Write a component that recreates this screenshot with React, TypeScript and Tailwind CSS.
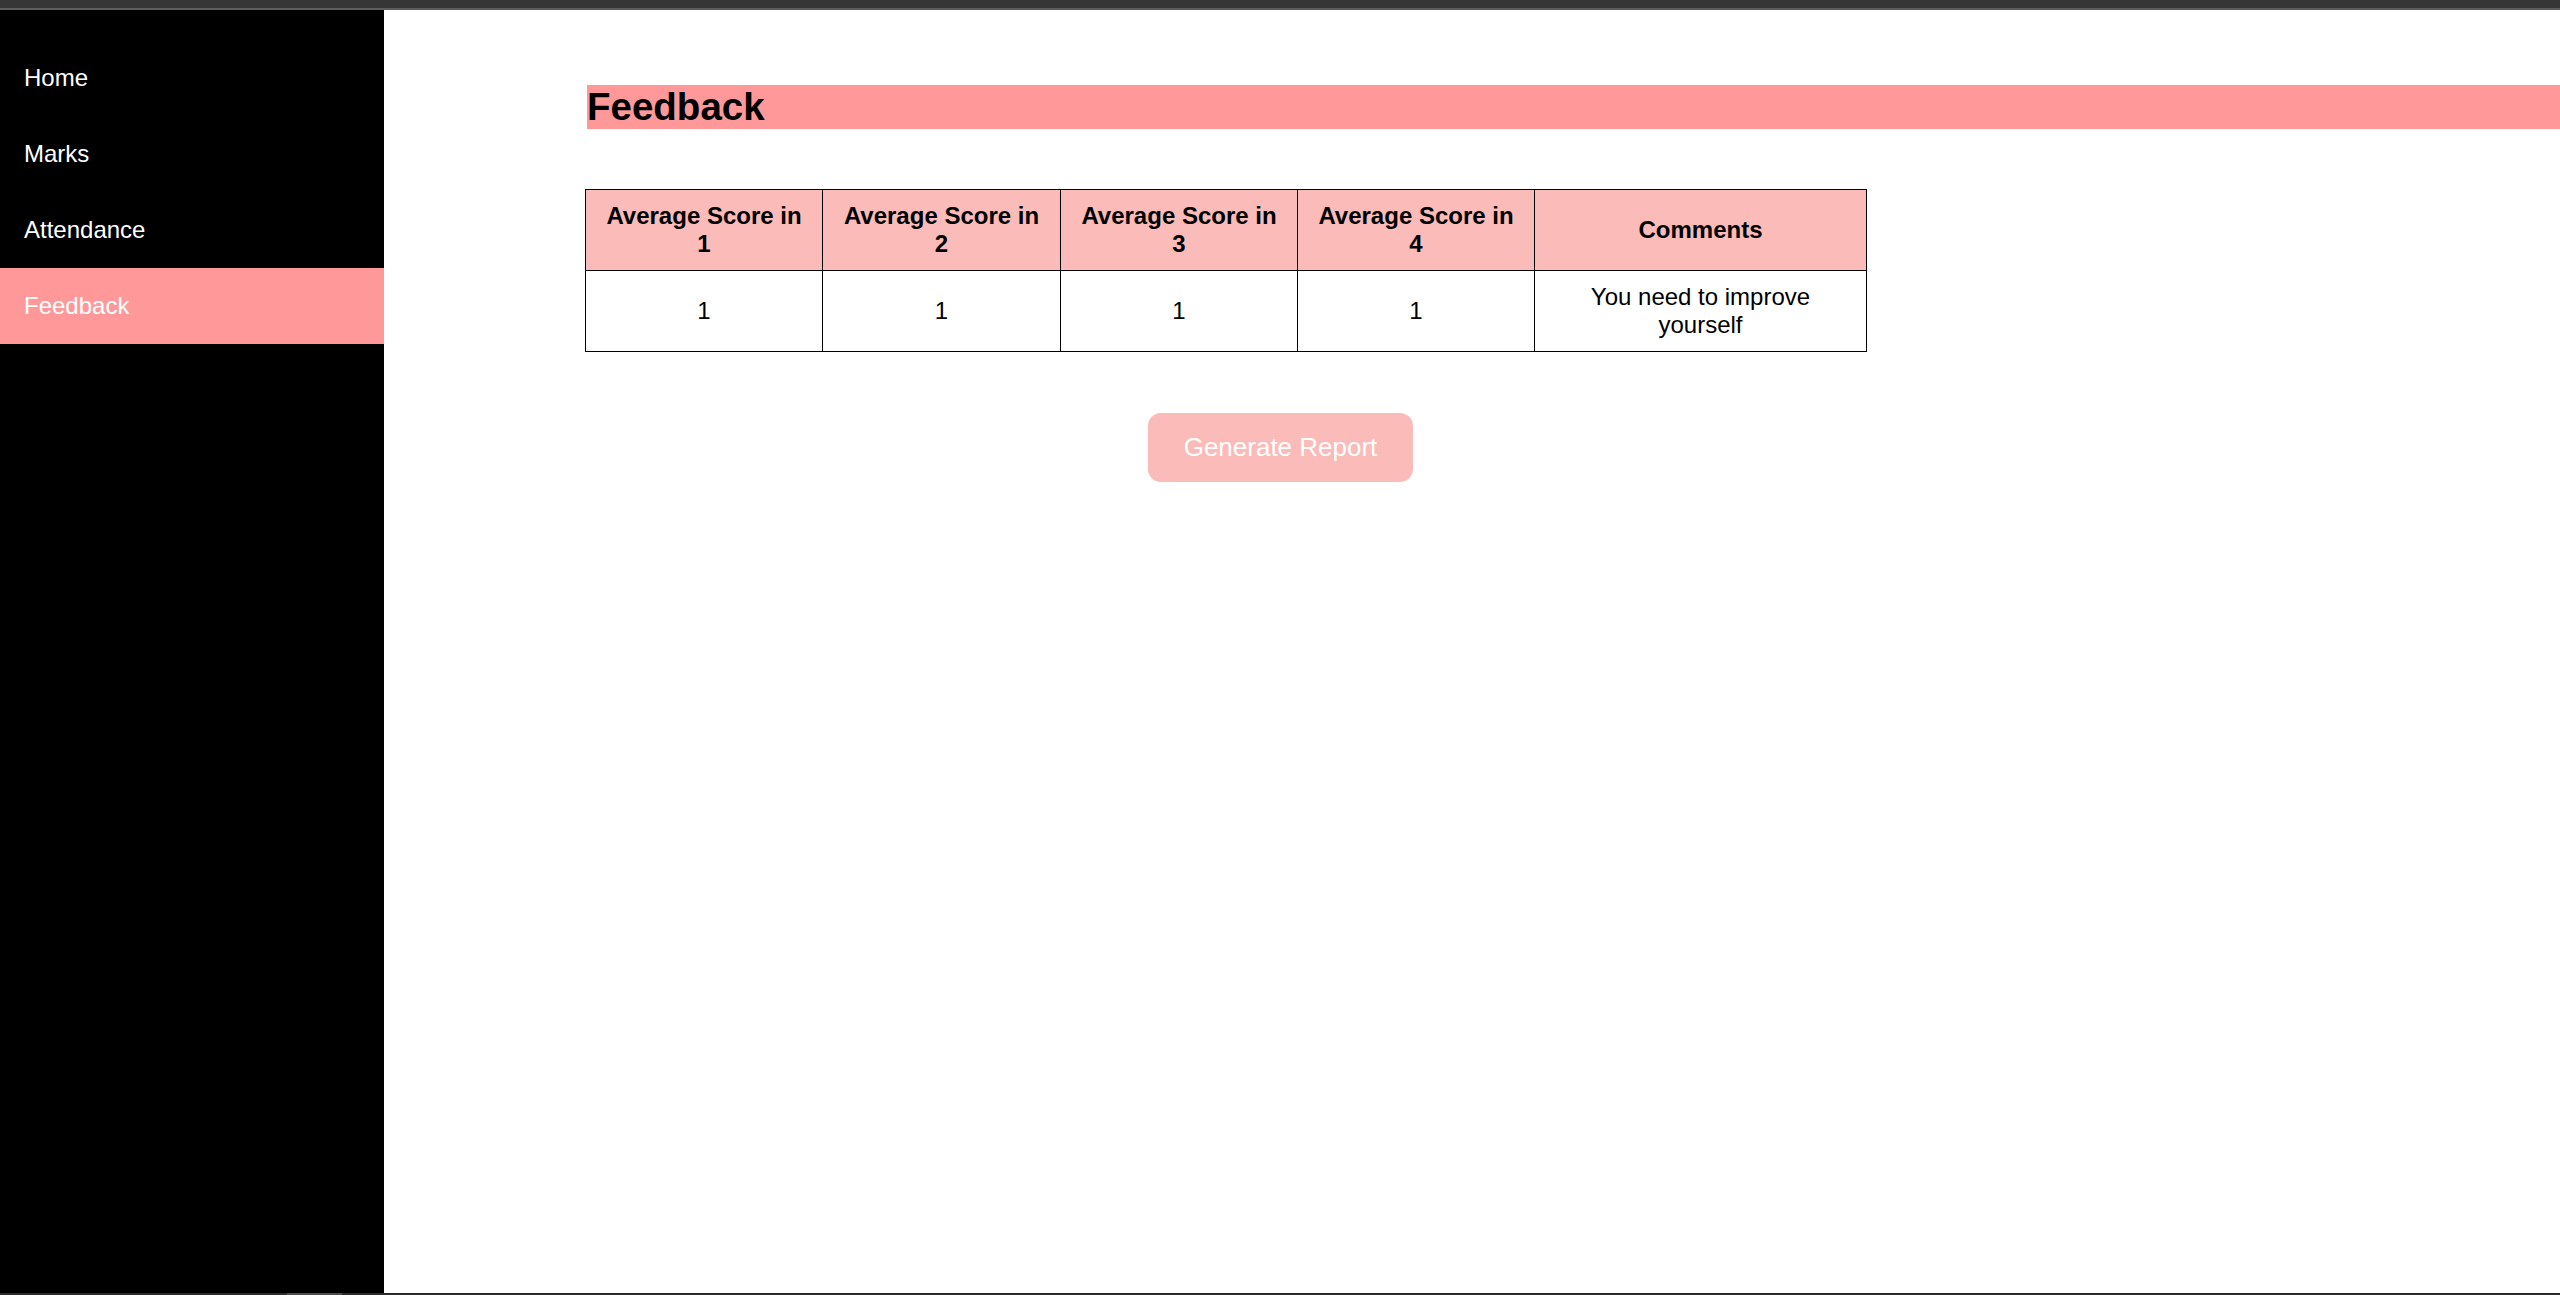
const navItems = ['Home', 'Marks', 'Attendance', 'Feedback']

const headers = ['Average Score in 1', 'Average Score in 2', 'Average Score in 3', 'Average Score in 4', 'Comments']
const scores = ['1', '1', '1', '1']

export default function App() {
  const active = 'Feedback'

  return (
    <div
      className="w-[2560px] h-[1295px] flex flex-col overflow-hidden bg-white"
      style={{ fontFamily: '"Liberation Sans", Arial, sans-serif' }}
    >
      {/* window chrome */}
      <div className="h-[8px] bg-[#363636]" />
      <div className="h-[2px] bg-[#5e5e5e]" />

      <div className="flex flex-1 min-h-0">
        {/* Sidebar */}
        <nav className="w-[384px] shrink-0 bg-black pt-[30px]">
          {navItems.map((item) => (
            <div
              key={item}
              className={`h-[76px] flex items-center pl-[24px] text-[24px] text-white ${
                item === active ? 'bg-[#ff9999]' : ''
              }`}
            >
              {item}
            </div>
          ))}
        </nav>

        {/* Main */}
        <main className="flex-1 pt-[75px]">
          <h2 className="ml-[203px] bg-[#ff9999] text-[38.5px] font-bold leading-[44px] text-black">
            Feedback
          </h2>

          <table className="ml-[201px] mt-[60px] w-[1281px] table-fixed border-collapse text-[24px] leading-[27.6px] text-black">
            <colgroup>
              <col className="w-[237px]" />
              <col className="w-[238px]" />
              <col className="w-[237px]" />
              <col className="w-[237px]" />
              <col className="w-[332px]" />
            </colgroup>
            <thead>
              <tr className="h-[81px] bg-[#fbbbb8]">
                {headers.map((h) => (
                  <th key={h} className="border border-black px-[13px] py-[12px] font-bold text-center">
                    {h}
                  </th>
                ))}
              </tr>
            </thead>
            <tbody>
              <tr className="h-[81px]">
                {scores.map((s, i) => (
                  <td key={i} className="border border-black px-[13px] py-[12px] text-center">
                    {s}
                  </td>
                ))}
                <td className="border border-black px-[13px] py-[12px] text-center">
                  You need to improve yourself
                </td>
              </tr>
            </tbody>
          </table>

          <button className="ml-[764px] mt-[61px] w-[265px] h-[69px] flex items-center justify-center rounded-[13px] bg-[#fbbbb8] text-[26px] text-white">
            Generate Report
          </button>
        </main>
      </div>

      {/* bottom scrollbar strip */}
      <div className="h-[2px] bg-[#2b2b2b] flex">
        <div className="ml-[287px] w-[55px] bg-[#4d4d4d]" />
      </div>
    </div>
  )
}
